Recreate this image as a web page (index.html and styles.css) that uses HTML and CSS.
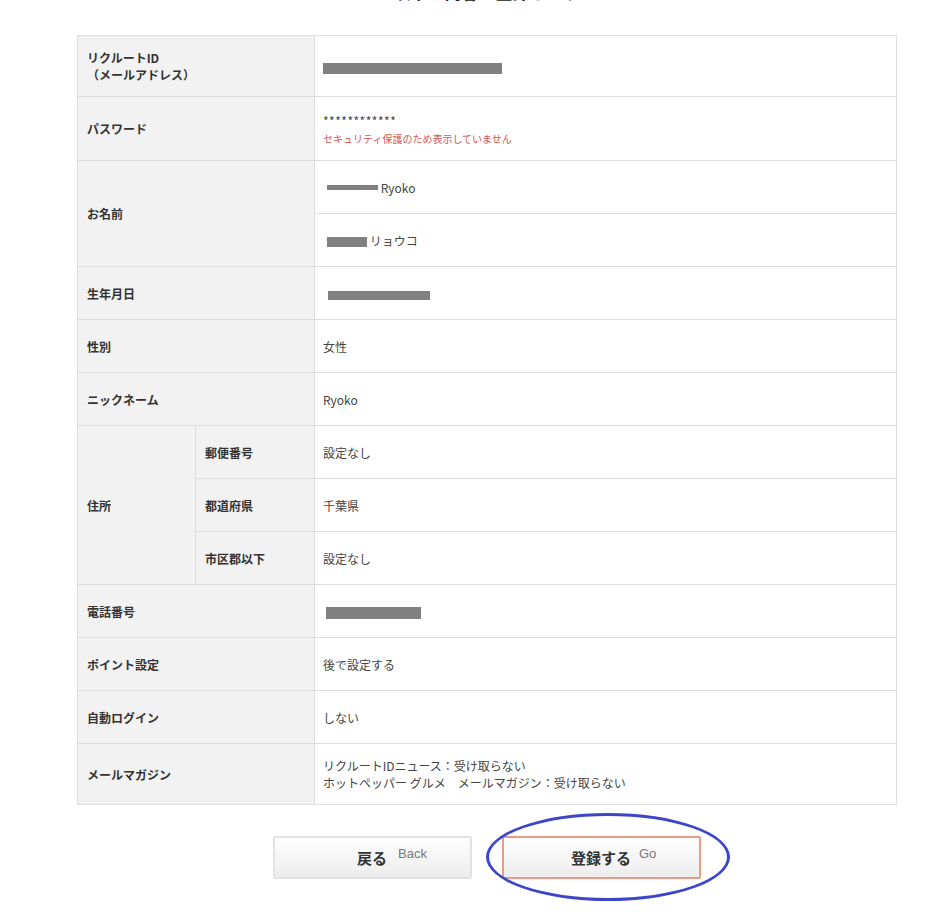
FILE: index.html
```html
<!DOCTYPE html>
<html lang="ja">
  <head>
    <meta charset="utf-8">
    <link rel="stylesheet" href="styles.css">
  </head>
  <body>
  <main class="confirm">
    <h2 class="lead">以下の内容で登録します</h2>

    <table class="info">
      <tr class="r61">
        <th colspan="2">リクルートID<br>（メールアドレス）</th>
        <td><span class="mask mask-mail"></span></td>
      </tr>
      <tr class="r64">
        <th colspan="2">パスワード</th>
        <td>
          <div class="stars">************</div>
          <div class="note">セキュリティ保護のため表示していません</div>
        </td>
      </tr>
      <tr>
        <th colspan="2" rowspan="2">お名前</th>
        <td><span class="mask mask-first"></span> Ryoko</td>
      </tr>
      <tr>
        <td><span class="mask mask-kana"></span> リョウコ</td>
      </tr>
      <tr>
        <th colspan="2">生年月日</th>
        <td><span class="mask mask-birth"></span></td>
      </tr>
      <tr>
        <th colspan="2">性別</th>
        <td>女性</td>
      </tr>
      <tr>
        <th colspan="2">ニックネーム</th>
        <td>Ryoko</td>
      </tr>
      <tr>
        <th class="group" rowspan="3">住所</th>
        <th class="sub">郵便番号</th>
        <td>設定なし</td>
      </tr>
      <tr>
        <th class="sub">都道府県</th>
        <td>千葉県</td>
      </tr>
      <tr>
        <th class="sub">市区郡以下</th>
        <td>設定なし</td>
      </tr>
      <tr>
        <th colspan="2">電話番号</th>
        <td><span class="mask mask-tel"></span></td>
      </tr>
      <tr>
        <th colspan="2">ポイント設定</th>
        <td>後で設定する</td>
      </tr>
      <tr>
        <th colspan="2">自動ログイン</th>
        <td>しない</td>
      </tr>
      <tr class="r61">
        <th colspan="2">メールマガジン</th>
        <td>リクルートIDニュース：受け取らない<br>ホットペッパー グルメ　メールマガジン：受け取らない</td>
      </tr>
    </table>

    <section class="actions">
      <button class="btn" type="button"><span class="label">戻る<sup>Back</sup></span></button>
      <button class="btn btn-go" type="button"><span class="label">登録する<sup>Go</sup></span></button>
      <span class="circle"></span>
    </section>
  </main>
  </body>
</html>
```

FILE: styles.css
```css
* {
  box-sizing: border-box;
}
body {
  margin: 0;
  background-color: #fff;
  color: #333;
  font-family: "Noto Sans CJK JP", "Noto Sans", sans-serif;
  font-size: 12px;
}
.confirm {
  width: 820px;
  margin-left: 77px;
  padding-bottom: 40px;
}
.lead {
  margin: -17px 0 0;
  height: 52px;
  text-align: center;
  font-size: 17px;
  line-height: 18px;
  color: #222;
}
.info {
  width: 820px;
  border-collapse: collapse;
  border: 1px solid #ddd;
}
.info tr {
  height: 53px;
}
.info tr.r61 {
  height: 61px;
}
.info tr.r64 {
  height: 64px;
}
.info th,
.info td {
  border: 1px solid #ddd;
  padding: 0 8px;
  text-align: left;
  vertical-align: middle;
  line-height: 17px;
}
.info th {
  width: 237px;
  background-color: #f2f2f2;
  font-weight: bold;
  padding-left: 9px;
  color: #333;
}
.info th.group {
  width: 118px;
}
.info th.sub {
  width: 119px;
}
.info td {
  color: #444;
}
.mask {
  display: inline-block;
  background-color: #808080;
  vertical-align: middle;
}
.mask-mail {
  width: 179px;
  height: 11px;
}
.mask-first {
  width: 51px;
  height: 5px;
  margin-left: 4px;
  vertical-align: 3px;
}
.mask-kana {
  width: 40px;
  height: 10px;
  margin-left: 4px;
}
.mask-birth {
  width: 102px;
  height: 9px;
  margin-left: 5px;
}
.mask-tel {
  width: 95px;
  height: 12px;
  margin-left: 3px;
}
.stars {
  font-size: 12px;
  letter-spacing: 0.5px;
  margin-top: 2px;
}
.note {
  color: #d9534f;
  font-size: 10px;
  margin-top: 1px;
}
.actions {
  position: relative;
  display: flex;
  justify-content: center;
  gap: 30px;
  margin-top: 31px;
  padding-right: 1px;
}
.btn {
  width: 199px;
  height: 43px;
  border: 2px solid #e2e2e2;
  border-radius: 2px;
  background: linear-gradient(#ffffff, #ececec);
  font-family: "Noto Sans CJK JP", sans-serif;
  font-size: 15px;
  font-weight: bold;
  color: #333;
  padding: 0;
}
.btn .label {
  position: relative;
  display: inline-block;
}
.btn sup {
  position: absolute;
  left: 100%;
  top: -1px;
  margin-left: 11px;
  font-family: "Liberation Sans", sans-serif;
  font-size: 13px;
  line-height: 16px;
  font-weight: normal;
  color: #777;
}
.btn-go sup {
  margin-left: 8px;
}
.btn-go {
  border-color: #ee9a86;
}
.circle {
  position: absolute;
  left: 409px;
  top: -23px;
  width: 244px;
  height: 88px;
  border: 3px solid #3c46c8;
  border-radius: 50%;
  pointer-events: none;
}
```
